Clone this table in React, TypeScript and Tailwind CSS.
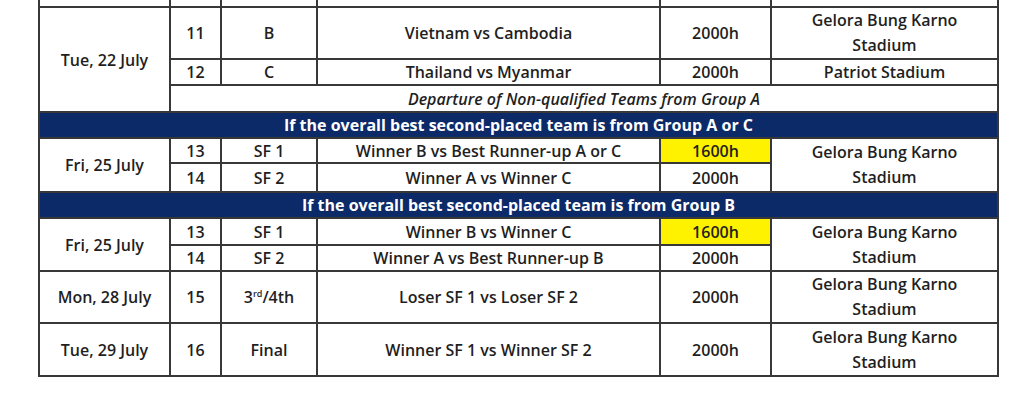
import React from "react";

const cell = "bg-white flex items-center justify-center text-center";
const top = "bg-white flex items-center justify-center text-center pb-[9px]";

function Venue() {
  return (
    <span className="leading-[25px]">
      Gelora Bung Karno
      <br />
      Stadium
    </span>
  );
}

export default function App() {
  return (
    <div
      className="w-[1020px] h-[407px] overflow-hidden bg-white text-[#1f1f1f] text-[16px] font-semibold"
      style={{ fontFamily: '"Open Sans", "Noto Sans", sans-serif' }}
    >
      <div className="ml-[38px] mt-[-20px] w-[961px] grid gap-[2px] border-2 border-[#383838] bg-[#383838] grid-cols-[129px_49px_94px_341px_109px_225px] grid-rows-[24px_50px_24px_25px_24px_23px_27px_24px_25px_24px_50px_51px]">
        {/* partial row above */}
        <div className={`${top} col-start-1 row-start-1`} />
        <div className={`${top} col-start-2 row-start-1`}>10</div>
        <div className={`${top} col-start-3 row-start-1`}>A</div>
        <div className={`${top} col-start-4 row-start-1`}>Philippines vs Malaysia</div>
        <div className={`${top} col-start-5 row-start-1`}>2000h</div>
        <div className={`${top} col-start-6 row-start-1`}>Stadium</div>

        {/* Tue 22 July */}
        <div className={`${cell} col-start-1 row-start-2 row-span-3`}>Tue, 22 July</div>
        <div className={`${cell} col-start-2 row-start-2`}>11</div>
        <div className={`${cell} col-start-3 row-start-2`}>B</div>
        <div className={`${cell} col-start-4 row-start-2`}>Vietnam vs Cambodia</div>
        <div className={`${cell} col-start-5 row-start-2`}>2000h</div>
        <div className={`${cell} col-start-6 row-start-2`}>
          <Venue />
        </div>
        <div className={`${cell} col-start-2 row-start-3`}>12</div>
        <div className={`${cell} col-start-3 row-start-3`}>C</div>
        <div className={`${cell} col-start-4 row-start-3`}>Thailand vs Myanmar</div>
        <div className={`${cell} col-start-5 row-start-3`}>2000h</div>
        <div className={`${cell} col-start-6 row-start-3`}>Patriot Stadium</div>
        <div className={`${cell} col-start-2 col-span-5 row-start-4 italic`}>
          Departure of Non-qualified Teams from Group A
        </div>

        {/* scenario A or C */}
        <div className="col-start-1 col-span-6 row-start-5 bg-[#0c2a68] text-white font-bold flex items-center justify-center">
          If the overall best second-placed team is from Group A or C
        </div>
        <div className={`${cell} col-start-1 row-start-6 row-span-2`}>Fri, 25 July</div>
        <div className={`${cell} col-start-2 row-start-6`}>13</div>
        <div className={`${cell} col-start-3 row-start-6`}>SF 1</div>
        <div className={`${cell} col-start-4 row-start-6`}>Winner B vs Best Runner-up A or C</div>
        <div className="col-start-5 row-start-6 bg-[#fff200] flex items-center justify-center">1600h</div>
        <div className={`${cell} col-start-6 row-start-6 row-span-2`}>
          <Venue />
        </div>
        <div className={`${cell} col-start-2 row-start-7`}>14</div>
        <div className={`${cell} col-start-3 row-start-7`}>SF 2</div>
        <div className={`${cell} col-start-4 row-start-7`}>Winner A vs Winner C</div>
        <div className={`${cell} col-start-5 row-start-7`}>2000h</div>

        {/* scenario B */}
        <div className="col-start-1 col-span-6 row-start-8 bg-[#0c2a68] text-white font-bold flex items-center justify-center">
          If the overall best second-placed team is from Group B
        </div>
        <div className={`${cell} col-start-1 row-start-9 row-span-2`}>Fri, 25 July</div>
        <div className={`${cell} col-start-2 row-start-9`}>13</div>
        <div className={`${cell} col-start-3 row-start-9`}>SF 1</div>
        <div className={`${cell} col-start-4 row-start-9`}>Winner B vs Winner C</div>
        <div className="col-start-5 row-start-9 bg-[#fff200] flex items-center justify-center">1600h</div>
        <div className={`${cell} col-start-6 row-start-9 row-span-2`}>
          <Venue />
        </div>
        <div className={`${cell} col-start-2 row-start-10`}>14</div>
        <div className={`${cell} col-start-3 row-start-10`}>SF 2</div>
        <div className={`${cell} col-start-4 row-start-10`}>Winner A vs Best Runner-up B</div>
        <div className={`${cell} col-start-5 row-start-10`}>2000h</div>

        {/* third place */}
        <div className={`${cell} col-start-1 row-start-11`}>Mon, 28 July</div>
        <div className={`${cell} col-start-2 row-start-11`}>15</div>
        <div className={`${cell} col-start-3 row-start-11`}>
          <span>
            3<span className="relative top-[-6px] text-[9px]">rd</span>/4th
          </span>
        </div>
        <div className={`${cell} col-start-4 row-start-11`}>Loser SF 1 vs Loser SF 2</div>
        <div className={`${cell} col-start-5 row-start-11`}>2000h</div>
        <div className={`${cell} col-start-6 row-start-11`}>
          <Venue />
        </div>

        {/* final */}
        <div className={`${cell} col-start-1 row-start-12`}>Tue, 29 July</div>
        <div className={`${cell} col-start-2 row-start-12`}>16</div>
        <div className={`${cell} col-start-3 row-start-12`}>Final</div>
        <div className={`${cell} col-start-4 row-start-12`}>Winner SF 1 vs Winner SF 2</div>
        <div className={`${cell} col-start-5 row-start-12`}>2000h</div>
        <div className={`${cell} col-start-6 row-start-12`}>
          <Venue />
        </div>
      </div>
    </div>
  );
}
